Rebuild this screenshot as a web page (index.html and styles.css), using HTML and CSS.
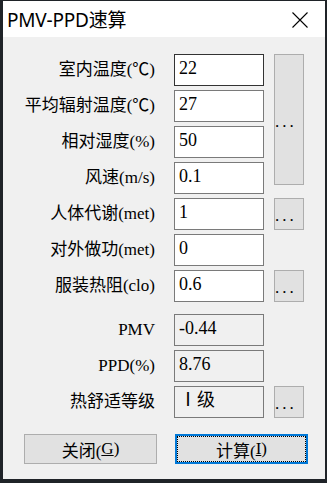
FILE: index.html
```html
<!doctype html>
<html lang="zh">
<head>
    <meta charset="UTF-8">
    <title>PMV-PPD速算</title>
    <link rel="stylesheet" href="styles.css">
</head>
<body>
    <div class="window">
        <div class="titlebar">
            <div class="title">PMV-PPD速算</div>
            <div class="close">
                <svg width="16" height="16" viewBox="0 0 16 16">
                    <path d="M0.5 0.5 L15.5 15.5 M15.5 0.5 L0.5 15.5" stroke="#000" stroke-width="1.1" fill="none"/>
                </svg>
            </div>
        </div>
        <div class="inputs">
            <div class="label">室内温度(℃)</div>
            <div class="field focus">22</div>
            <div class="btn tall">...</div>

            <div class="label">平均辐射温度(℃)</div>
            <div class="field">27</div>

            <div class="label">相对湿度(%)</div>
            <div class="field">50</div>

            <div class="label">风速(m/s)</div>
            <div class="field">0.1</div>

            <div class="label">人体代谢(met)</div>
            <div class="field">1</div>
            <div class="btn">...</div>

            <div class="label">对外做功(met)</div>
            <div class="field">0</div>
            <div></div>

            <div class="label">服装热阻(clo)</div>
            <div class="field">0.6</div>
            <div class="btn">...</div>
        </div>
        <div class="inputs results">
            <div class="label">PMV</div>
            <div class="field readonly">-0.44</div>
            <div></div>

            <div class="label">PPD(%)</div>
            <div class="field readonly">8.76</div>
            <div></div>

            <div class="label">热舒适等级</div>
            <div class="field readonly">Ⅰ级</div>
            <div class="btn">...</div>
        </div>
        <div class="actions">
            <div class="action">关闭(<u>G</u>)</div>
            <div class="action default">计算(<u>I</u>)</div>
        </div>
    </div>
</body>
</html>
```

FILE: styles.css
```css
* {
    box-sizing: border-box;
}

body {
    margin: 0;
    background: #1f2328;
    font-family: "Liberation Serif", "Noto Sans CJK SC", serif;
    font-size: 17px;
    color: #000;
}

.window {
    margin: 1px 0 0 3px;
    width: 322px;
    height: 478px;
    background: #f0f0f0;
}

.titlebar {
    height: 36px;
    background: #fff;
    display: flex;
    align-items: center;
    justify-content: space-between;
    padding: 0 17px 0 4px;
}

.title {
    font-family: "Noto Sans", "Noto Sans CJK SC", sans-serif;
    font-size: 19px;
    letter-spacing: -0.2px;
}

.close {
    display: flex;
    margin-top: 1px;
}

.inputs {
    display: grid;
    grid-template-columns: 161px 90px 30px;
    grid-auto-rows: 32px;
    column-gap: 10px;
    row-gap: 4px;
    padding-top: 17px;
}

.results {
    padding-top: 12px;
}

.label {
    text-align: right;
    padding-right: 9px;
    align-self: center;
    line-height: 20px;
    white-space: nowrap;
}

.field {
    grid-column: 2;
    background: #fff;
    border: 1px solid #7a7a7a;
    padding: 2px 4px;
    font-size: 18px;
    line-height: 22px;
}

.field.focus {
    border-color: #333;
}

.field.readonly {
    background: #f0f0f0;
}

.btn {
    grid-column: 3;
    background: #e1e1e1;
    border: 1px solid #adadad;
    display: flex;
    align-items: center;
    padding-top: 4px;
    font-size: 17px;
    letter-spacing: 3px;
    overflow: hidden;
}

.btn.tall {
    grid-row: 1 / span 4;
    height: 131px;
}

.actions {
    display: flex;
    gap: 18px;
    padding: 16px 0 0 21px;
}

.action {
    width: 133px;
    height: 30px;
    background: #e1e1e1;
    border: 1px solid #adadad;
    display: flex;
    align-items: center;
    justify-content: center;
    font-size: 17px;
}

.action.default {
    border: 2px solid #0078d7;
    outline: 1px dotted #000;
    outline-offset: -3px;
}
```
